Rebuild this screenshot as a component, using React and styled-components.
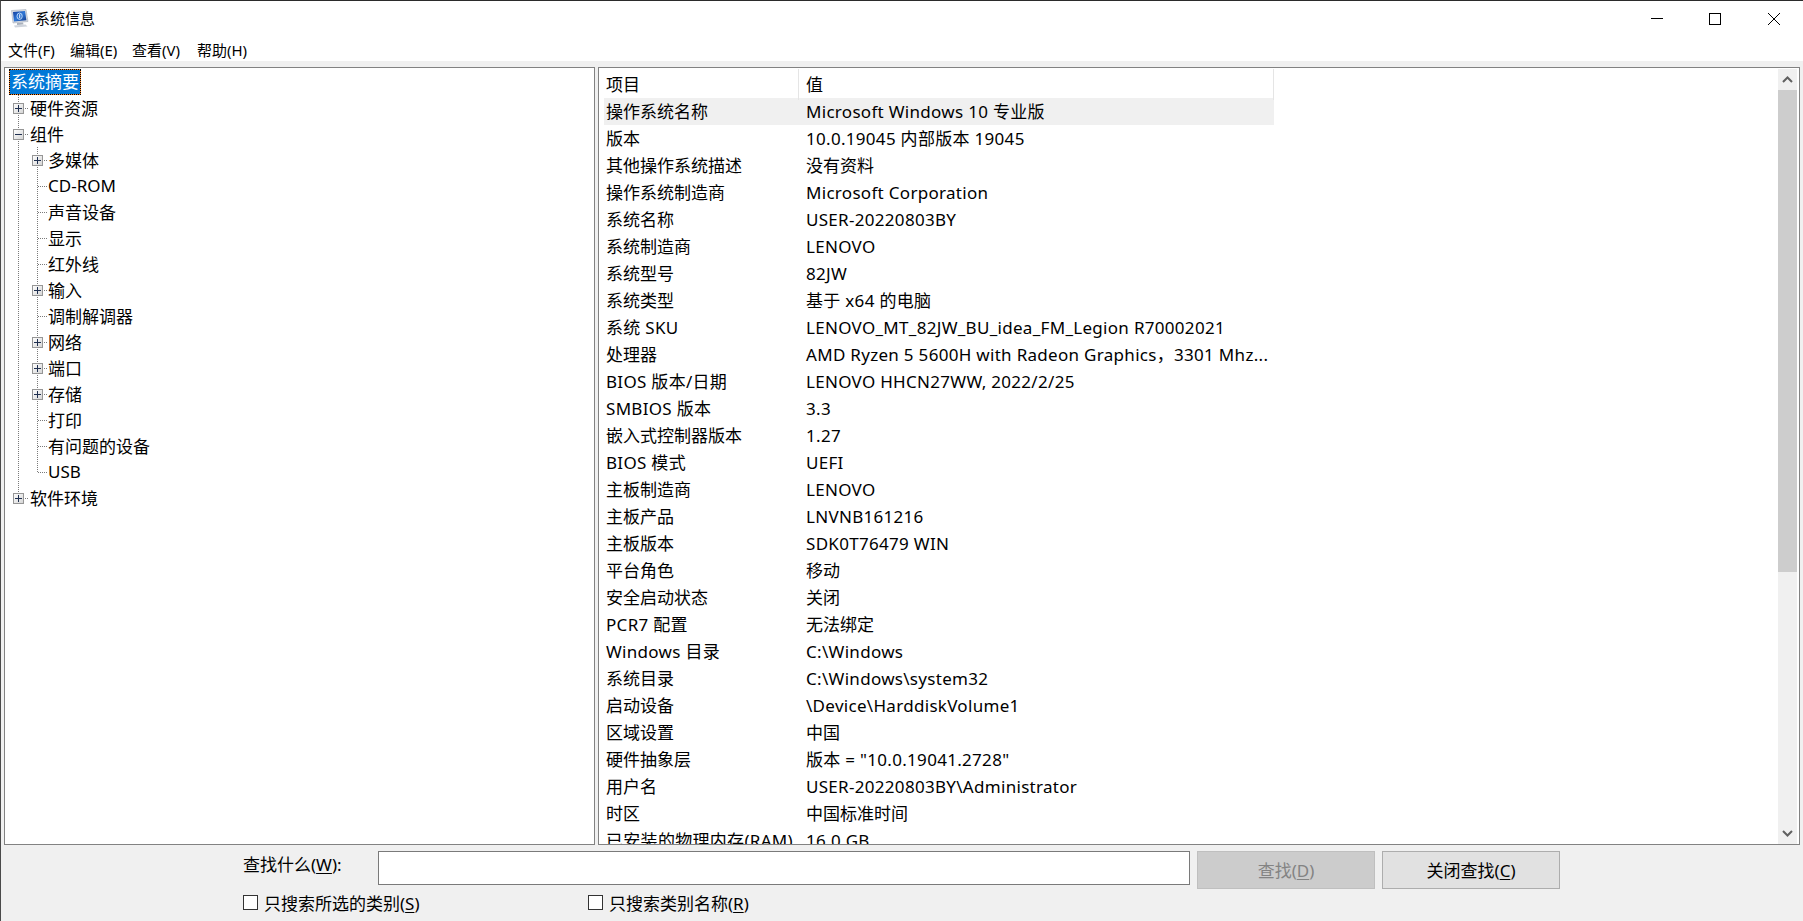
import React from "react";
import styled, { createGlobalStyle } from "styled-components";

const FONT = `"Noto Sans", "Noto Sans CJK SC", sans-serif`;

const GlobalStyle = createGlobalStyle`
  html, body {
    margin: 0;
    padding: 0;
    background: #f0f0f0;
  }
  * {
    box-sizing: border-box;
  }
`;

const Window = styled.div`
  width: 1803px;
  height: 921px;
  display: flex;
  flex-direction: column;
  overflow: hidden;
  background: #f0f0f0;
  border-top: 1px solid #2b2b2b;
  border-left: 1px solid #4a4a4a;
  font-family: ${FONT};
  color: #000;
`;

const TitleBar = styled.div`
  height: 35px;
  flex: none;
  display: flex;
  align-items: center;
  background: #fff;
  padding-left: 10px;
`;

const TitleText = styled.span`
  margin-left: 6px;
  flex: 1;
  font-size: 15px;
  line-height: 37px;
`;

const WindowButton = styled.div`
  width: 58.5px;
  height: 35px;
  display: flex;
  align-items: center;
  justify-content: center;
`;

const MenuBar = styled.div`
  height: 25px;
  flex: none;
  display: flex;
  background: #fff;
  padding-left: 7px;
`;

const MenuItem = styled.span`
  width: ${(p) => p.$width}px;
  font-size: 15px;
  line-height: 28px;
  height: 25px;
`;

const Panes = styled.div`
  height: 778px;
  flex: none;
  margin-top: 6px;
  padding: 0 3px 0 3px;
  display: flex;
  gap: 3px;
`;

const Pane = styled.div`
  border: 1px solid #828282;
  background: #fff;
  overflow: hidden;
  display: flex;
`;

const TreePane = styled(Pane)`
  width: 591px;
  flex: none;
  flex-direction: column;
  padding-top: 1px;
`;

const ListPane = styled(Pane)`
  flex: 1;
`;

const TreeRow = styled.div`
  height: 26px;
  flex: none;
  display: flex;
  align-items: center;
  font-size: 17px;
  white-space: nowrap;
`;

const TreeText = styled.span`
  margin-bottom: 2px;
`;

const SelectedLabel = styled.span`
  margin-left: 4px;
  height: 26px;
  line-height: 24px;
  padding: 0 1px;
  color: #fff;
  border: 1px dotted #000;
  background: linear-gradient(#0078d7, #0078d7) padding-box, #ff8728 border-box;
`;

const Glyph = styled.svg`
  flex: none;
  display: block;
`;

const ListArea = styled.div`
  flex: 1;
  min-width: 0;
  overflow: hidden;
`;

const HeaderRow = styled.div`
  display: grid;
  grid-template-columns: 195px 475px;
  height: 30px;
  margin-left: 5px;
  width: 670px;
  padding-top: 1px;
`;

const HeaderCell = styled.div`
  font-size: 17px;
  line-height: 31px;
  padding-left: ${(p) => (p.$value ? 7 : 2)}px;
  border-right: 1px solid #e5e5e5;
`;

const DataRow = styled.div`
  display: grid;
  grid-template-columns: 195px 475px;
  height: 27px;
  width: 670px;
  margin-left: 5px;
  font-size: 17px;
  line-height: 27px;
  white-space: nowrap;
  background: ${(p) => (p.$active ? "#f0f0f0" : "transparent")};
`;

const DataCell = styled.div`
  padding-left: ${(p) => (p.$value ? 7 : 2)}px;
  overflow: hidden;
  letter-spacing: ${(p) => (p.$latin ? "0.3px" : "0")};
`;

const ScrollBar = styled.div`
  width: 19px;
  flex: none;
  margin-right: 2px;
  margin-top: 1px;
  display: flex;
  flex-direction: column;
  background: #f0f0f0;
`;

const ScrollButton = styled.div`
  height: 21px;
  flex: none;
  display: flex;
  align-items: center;
  justify-content: center;
`;

const ScrollThumb = styled.div`
  height: 482px;
  flex: none;
  background: #cdcdcd;
`;

const ScrollTrack = styled.div`
  flex: 1;
`;

const FindBar = styled.div`
  flex: 1;
  padding: 6px 0 0 242px;
  display: flex;
  flex-direction: column;
`;

const FindRow = styled.div`
  display: flex;
  align-items: flex-start;
`;

const FindLabel = styled.label`
  width: 135px;
  font-size: 17px;
  line-height: 28px;
`;

const FindInput = styled.div`
  width: 812px;
  height: 34px;
  background: #fff;
  border: 1px solid #7a7a7a;
`;

const Button = styled.div`
  width: 178px;
  height: 38px;
  margin-left: 7px;
  padding-bottom: 2px;
  display: flex;
  align-items: center;
  justify-content: center;
  font-size: 17px;
  background: ${(p) => (p.$disabled ? "#cccccc" : "#e1e1e1")};
  border: 1px solid ${(p) => (p.$disabled ? "#bfbfbf" : "#adadad")};
  color: ${(p) => (p.$disabled ? "#838383" : "#000")};
`;

const OptionRow = styled.div`
  display: flex;
  margin-top: 1px;
`;

const Option = styled.div`
  width: ${(p) => p.$width}px;
  display: flex;
  align-items: center;
  height: 24px;
  font-size: 17px;
`;

const CheckBox = styled.span`
  width: 15px;
  height: 15px;
  margin-right: 6px;
  background: #fff;
  border: 1px solid #333;
`;

const Mnemonic = styled.span`
  text-decoration: underline;
  text-underline-offset: 2px;
`;

const DOT = "#7a7a7a";

const hasLatin = (text) => /[A-Za-z0-9]/.test(text);

// tree gutter column: dotted guide, elbow and optional +/- box
const Guide = ({ width = 25, through, elbow, box }) => (
  <Glyph width={width} height="26" viewBox={`0 0 ${width} 26`}>
    {(through || elbow) && (
      <line
        x1="13.5"
        y1="0"
        x2="13.5"
        y2={through ? 26 : 14}
        stroke={DOT}
        strokeDasharray="1 1"
      />
    )}
    {elbow && (
      <line x1="14" y1="13.5" x2={width - 1} y2="13.5" stroke={DOT} strokeDasharray="1 1" />
    )}
    {box && (
      <g>
        <defs>
          <linearGradient id="boxFill" x1="0" y1="0" x2="1" y2="1">
            <stop offset="0" stopColor="#ffffff" />
            <stop offset="1" stopColor="#d4d4d4" />
          </linearGradient>
        </defs>
        <rect x="8.5" y="8.5" width="10" height="10" fill="url(#boxFill)" stroke="#969696" />
        <line x1="10" y1="13.5" x2="17" y2="13.5" stroke="#1f2f4f" />
        {box === "plus" && <line x1="13.5" y1="10" x2="13.5" y2="17" stroke="#1f2f4f" />}
      </g>
    )}
  </Glyph>
);

const AppIcon = () => (
  <Glyph width="18" height="19" viewBox="0 0 18 19">
    <defs>
      <linearGradient id="screen" x1="0" y1="0" x2="1" y2="1">
        <stop offset="0" stopColor="#123c9c" />
        <stop offset="0.5" stopColor="#2f78d8" />
        <stop offset="1" stopColor="#123a8c" />
      </linearGradient>
    </defs>
    <path d="M0.5 1.5 L15 0.5 L17 12.5 L2 14 Z" fill="#d5dae2" stroke="#9aa3b0" strokeWidth="0.5" />
    <path d="M2 3 L14 2 L15.4 11.2 L3 12.4 Z" fill="url(#screen)" />
    <ellipse cx="8.6" cy="7.2" rx="2.6" ry="3.2" fill="none" stroke="#bcd8f8" strokeWidth="1" />
    <rect x="8.2" y="5.2" width="1" height="4" fill="#eaf3ff" />
    <path d="M6 14 L12 13.4 L12.6 15.6 L6 16 Z" fill="#aab1bc" />
    <path d="M3 16.4 L14.5 15.4 L16.5 17.4 L4 18.6 Z" fill="#cfd4dc" />
  </Glyph>
);

const TREE = [
  { label: "硬件资源", box: "plus" },
  { label: "组件", box: "minus" },
  { label: "多媒体", box: "plus", child: true },
  { label: "CD-ROM", child: true },
  { label: "声音设备", child: true },
  { label: "显示", child: true },
  { label: "红外线", child: true },
  { label: "输入", box: "plus", child: true },
  { label: "调制解调器", child: true },
  { label: "网络", box: "plus", child: true },
  { label: "端口", box: "plus", child: true },
  { label: "存储", box: "plus", child: true },
  { label: "打印", child: true },
  { label: "有问题的设备", child: true },
  { label: "USB", child: true, last: true },
  { label: "软件环境", box: "plus", last: true },
];

const ROWS = [
  ["操作系统名称", "Microsoft Windows 10 专业版"],
  ["版本", "10.0.19045 内部版本 19045"],
  ["其他操作系统描述", "没有资料"],
  ["操作系统制造商", "Microsoft Corporation"],
  ["系统名称", "USER-20220803BY"],
  ["系统制造商", "LENOVO"],
  ["系统型号", "82JW"],
  ["系统类型", "基于 x64 的电脑"],
  ["系统 SKU", "LENOVO_MT_82JW_BU_idea_FM_Legion R70002021"],
  ["处理器", "AMD Ryzen 5 5600H with Radeon Graphics，3301 Mhz..."],
  ["BIOS 版本/日期", "LENOVO HHCN27WW, 2022/2/25"],
  ["SMBIOS 版本", "3.3"],
  ["嵌入式控制器版本", "1.27"],
  ["BIOS 模式", "UEFI"],
  ["主板制造商", "LENOVO"],
  ["主板产品", "LNVNB161216"],
  ["主板版本", "SDK0T76479 WIN"],
  ["平台角色", "移动"],
  ["安全启动状态", "关闭"],
  ["PCR7 配置", "无法绑定"],
  ["Windows 目录", "C:\\Windows"],
  ["系统目录", "C:\\Windows\\system32"],
  ["启动设备", "\\Device\\HarddiskVolume1"],
  ["区域设置", "中国"],
  ["硬件抽象层", '版本 = "10.0.19041.2728"'],
  ["用户名", "USER-20220803BY\\Administrator"],
  ["时区", "中国标准时间"],
  ["已安装的物理内存(RAM)", "16.0 GB"],
];

const MENUS = [
  ["文件(F)", 62],
  ["编辑(E)", 62],
  ["查看(V)", 65],
  ["帮助(H)", 70],
];

const App = () => {
  return (
    <Window>
      <GlobalStyle />
      <TitleBar>
        <AppIcon />
        <TitleText>系统信息</TitleText>
        <WindowButton>
          <Glyph width="12" height="12" viewBox="0 0 12 12">
            <line x1="0" y1="5.5" x2="12" y2="5.5" stroke="#000" />
          </Glyph>
        </WindowButton>
        <WindowButton>
          <Glyph width="12" height="12" viewBox="0 0 12 12">
            <rect x="0.5" y="0.5" width="11" height="11" fill="none" stroke="#000" />
          </Glyph>
        </WindowButton>
        <WindowButton>
          <Glyph width="12" height="12" viewBox="0 0 12 12">
            <path d="M0 0 L12 12 M12 0 L0 12" stroke="#000" fill="none" />
          </Glyph>
        </WindowButton>
      </TitleBar>
      <MenuBar>
        {MENUS.map(([label, width]) => (
          <MenuItem key={label} $width={width}>
            {label}
          </MenuItem>
        ))}
      </MenuBar>
      <Panes>
        <TreePane>
          <TreeRow>
            <SelectedLabel>系统摘要</SelectedLabel>
          </TreeRow>
          {TREE.map((node) => (
            <TreeRow key={node.label}>
              {node.child ? (
                <>
                  <Guide width={19} through />
                  <Guide width={24} through={!node.last} elbow box={node.box} />
                </>
              ) : (
                <Guide through={!node.last} elbow box={node.box} />
              )}
              <TreeText>{node.label}</TreeText>
            </TreeRow>
          ))}
        </TreePane>
        <ListPane>
          <ListArea>
            <HeaderRow>
              <HeaderCell>项目</HeaderCell>
              <HeaderCell $value>值</HeaderCell>
            </HeaderRow>
            {ROWS.map(([name, value], i) => (
              <DataRow key={name} $active={i === 0}>
                <DataCell $latin={hasLatin(name)}>{name}</DataCell>
                <DataCell $value $latin={hasLatin(value)}>
                  {value}
                </DataCell>
              </DataRow>
            ))}
          </ListArea>
          <ScrollBar>
            <ScrollButton>
              <Glyph width="11" height="7" viewBox="0 0 11 7">
                <path d="M1 6 L5.5 1.5 L10 6" fill="none" stroke="#606060" strokeWidth="2" />
              </Glyph>
            </ScrollButton>
            <ScrollThumb />
            <ScrollTrack />
            <ScrollButton>
              <Glyph width="11" height="7" viewBox="0 0 11 7">
                <path d="M1 1 L5.5 5.5 L10 1" fill="none" stroke="#606060" strokeWidth="2" />
              </Glyph>
            </ScrollButton>
          </ScrollBar>
        </ListPane>
      </Panes>
      <FindBar>
        <FindRow>
          <FindLabel>
            查找什么(<Mnemonic>W</Mnemonic>):
          </FindLabel>
          <FindInput />
          <Button $disabled>
            <span>
              查找(<Mnemonic>D</Mnemonic>)
            </span>
          </Button>
          <Button>
            <span>
              关闭查找(<Mnemonic>C</Mnemonic>)
            </span>
          </Button>
        </FindRow>
        <OptionRow>
          <Option $width={345}>
            <CheckBox />
            <span>
              只搜索所选的类别(<Mnemonic>S</Mnemonic>)
            </span>
          </Option>
          <Option $width={344}>
            <CheckBox />
            <span>
              只搜索类别名称(<Mnemonic>R</Mnemonic>)
            </span>
          </Option>
        </OptionRow>
      </FindBar>
    </Window>
  );
};

export default App;
